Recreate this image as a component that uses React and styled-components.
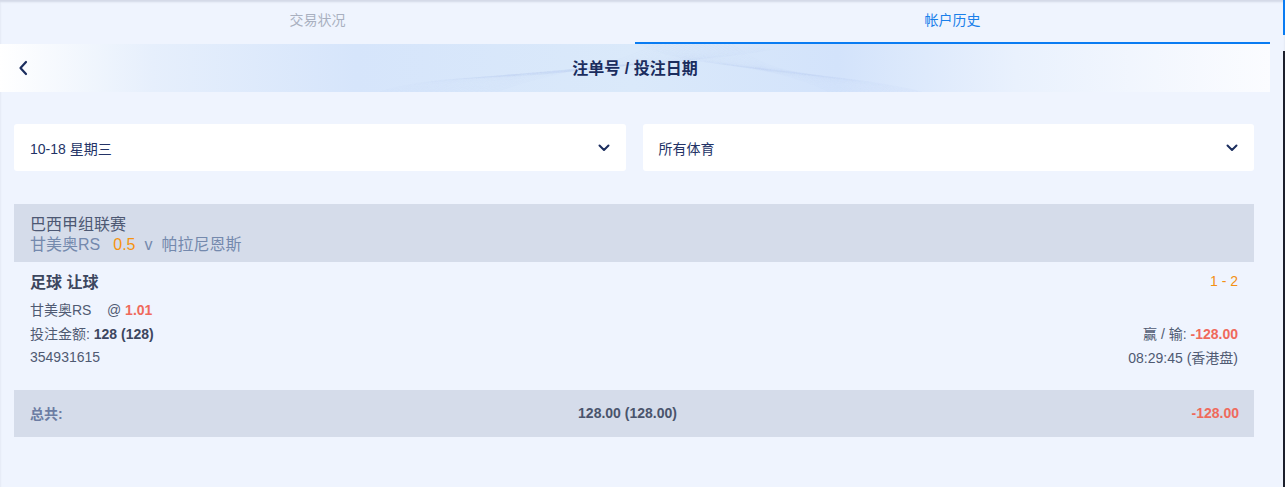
import React from "react";
import styled, { createGlobalStyle } from "styled-components";

const Global = createGlobalStyle`
  html, body { margin: 0; padding: 0; background: #eff4fe; }
  body { font-family: "Liberation Sans", "Noto Sans CJK SC", Arial, sans-serif; }
  * { box-sizing: border-box; }
`;

const Page = styled.div`
  display: flex;
  width: 1285px;
  height: 487px;
  background: #eff4fe;
  box-shadow: inset 0 2px 2px rgba(60, 70, 100, 0.15);
  overflow: hidden;
`;

const Main = styled.div`
  width: 1270px;
  display: flex;
  flex-direction: column;
`;

const Side = styled.div`
  width: 15px;
  display: flex;
  flex-direction: column;
  align-items: flex-end;
`;

const SideLine = styled.div`
  width: 2px;
  height: ${(p) => p.$h};
  margin-top: ${(p) => p.$mt || "0px"};
  background: ${(p) => p.$c};
`;

const Tabs = styled.div`
  display: flex;
  height: 44px;
`;

const Tab = styled.div`
  flex: 1;
  display: flex;
  align-items: center;
  justify-content: center;
  padding-bottom: 4px;
  font-size: 14px;
  color: ${(p) => (p.$active ? "#1a7fea" : "#a9b0c0")};
  border-bottom: 2px solid ${(p) => (p.$active ? "#0a7cf2" : "transparent")};
`;

const Header = styled.div`
  position: relative;
  height: 48px;
  display: flex;
  align-items: center;
  justify-content: center;
  background: linear-gradient(
    90deg,
    #ffffff 0%,
    #e6effc 12%,
    #d6e5fb 28%,
    #dae9fa 50%,
    #d3e3fb 66%,
    #e9f1fd 80%,
    #fbfcff 100%
  );
  overflow: hidden;
`;

const Waves = styled.svg`
  position: absolute;
  inset: 0;
  pointer-events: none;
`;

const BackBtn = styled.div`
  position: absolute;
  left: 15px;
  top: 15px;
  width: 16px;
  height: 18px;
  display: flex;
  align-items: center;
  justify-content: center;
`;

const Title = styled.div`
  position: relative;
  font-size: 16px;
  font-weight: 700;
  color: #1b2d5e;
  padding-bottom: 2px;
`;

const Filters = styled.div`
  display: flex;
  gap: 17px;
  padding: 32px 16px 0 14px;
`;

const Select = styled.div`
  flex: 1;
  height: 47px;
  background: #ffffff;
  border-radius: 3px;
  display: flex;
  align-items: center;
  justify-content: space-between;
  padding: 0 16px 0 16px;
  font-size: 14px;
  color: #233366;
`;

const Card = styled.div`
  margin: 33px 16px 0 14px;
`;

const League = styled.div`
  background: #d5dcea;
  height: 58px;
  padding: 11px 16px 0;
  display: flex;
  flex-direction: column;
`;

const LeagueName = styled.div`
  font-size: 16px;
  line-height: 20px;
  color: #4d5873;
`;

const Match = styled.div`
  font-size: 16px;
  line-height: 20px;
  color: #7489ad;
  display: flex;
`;

const Orange = styled.span`
  color: #f5930f;
  margin: 0 9px 0 13px;
`;

const Body = styled.div`
  padding: 7px 16px 0;
  display: flex;
  flex-direction: column;
`;

const Row = styled.div`
  display: flex;
  justify-content: space-between;
  align-items: center;
  height: 24px;
  margin-top: ${(p) => p.$mt || "0px"};
  font-size: 14px;
  color: #4f5a72;
`;

const Market = styled.div`
  font-size: 16px;
  font-weight: 700;
  color: #3d475f;
`;

const Score = styled.div`
  font-size: 14px;
  color: #f39012;
`;

const Strong = styled.b`
  color: #3d475f;
`;

const Red = styled.b`
  color: #ef6a5c;
`;

const Total = styled.div`
  margin: 21px 16px 0 14px;
  height: 47px;
  background: #d5dcea;
  display: grid;
  grid-template-columns: 1fr auto 1fr;
  align-items: center;
  padding: 0 15px 2px 16px;
  font-size: 14px;
  font-weight: 700;
`;

const TotalLabel = styled.div`
  color: #6c7ca3;
`;

const TotalMid = styled.div`
  color: #4a546c;
  margin-right: 14px;
`;

const TotalRight = styled.div`
  text-align: right;
  color: #ef6a5c;
`;

const Chevron = () => (
  <svg width="12" height="8" viewBox="0 0 12 8">
    <path d="M1.5 1.5 L6 6 L10.5 1.5" fill="none" stroke="#1b2d5e" strokeWidth="2" strokeLinecap="round" strokeLinejoin="round" />
  </svg>
);

export default function App() {
  const waves = [];
  for (let i = 0; i < 24; i++) {
    waves.push(
      <path
        key={"a" + i}
        d={`M ${380 + i * 5} 48 C ${470 + i * 6} ${20 - i * 0.5}, ${560 + i * 4} ${50 - i}, ${660 + i * 5} ${-2 + i * 0.3}`}
        fill="none"
        stroke="#b4cdee"
        strokeOpacity="0.1"
        strokeWidth="0.5"
      />
    );
    waves.push(
      <path
        key={"b" + i}
        d={`M ${640 + i * 4} 0 C ${690 + i * 4} ${26 + i * 0.6}, ${760 + i * 3} ${14 + i * 0.5}, ${830 + i * 4} 48`}
        fill="none"
        stroke="#b4cdee"
        strokeOpacity="0.1"
        strokeWidth="0.5"
      />
    );
  }
  return (
    <>
      <Global />
      <Page>
        <Main>
          <Tabs>
            <Tab>交易状况</Tab>
            <Tab $active>帐户历史</Tab>
          </Tabs>
          <Header>
            <Waves width="1270" height="48" viewBox="0 0 1270 48">
              {waves}
            </Waves>
            <BackBtn>
              <svg width="10" height="16" viewBox="0 0 10 16">
                <path d="M8 2 L2.5 8 L8 14" fill="none" stroke="#1b2d5e" strokeWidth="2.2" strokeLinecap="round" strokeLinejoin="round" />
              </svg>
            </BackBtn>
            <Title>注单号 / 投注日期</Title>
          </Header>
          <Filters>
            <Select>
              <span>10-18 星期三</span>
              <Chevron />
            </Select>
            <Select>
              <span>所有体育</span>
              <Chevron />
            </Select>
          </Filters>
          <Card>
            <League>
              <LeagueName>巴西甲组联赛</LeagueName>
              <Match>
                <span>甘美奥RS</span>
                <Orange>0.5</Orange>
                <span>v&nbsp;&nbsp;帕拉尼恩斯</span>
              </Match>
            </League>
            <Body>
              <Row>
                <Market>足球 让球</Market>
                <Score>1 - 2</Score>
              </Row>
              <Row $mt="4px">
                <span>
                  甘美奥RS&nbsp;&nbsp;&nbsp; @ <Red>1.01</Red>
                </span>
              </Row>
              <Row>
                <span>
                  投注金额: <Strong>128 (128)</Strong>
                </span>
                <span>
                  赢 / 输: <Red>-128.00</Red>
                </span>
              </Row>
              <Row>
                <span>354931615</span>
                <span>08:29:45 (香港盘)</span>
              </Row>
            </Body>
          </Card>
          <Total>
            <TotalLabel>总共:</TotalLabel>
            <TotalMid>128.00 (128.00)</TotalMid>
            <TotalRight>-128.00</TotalRight>
          </Total>
        </Main>
        <Side>
          <SideLine $h="35px" $c="#0a7cf2" />
          <SideLine $h="436px" $mt="16px" $c="#1c1f2c" />
        </Side>
      </Page>
    </>
  );
}
